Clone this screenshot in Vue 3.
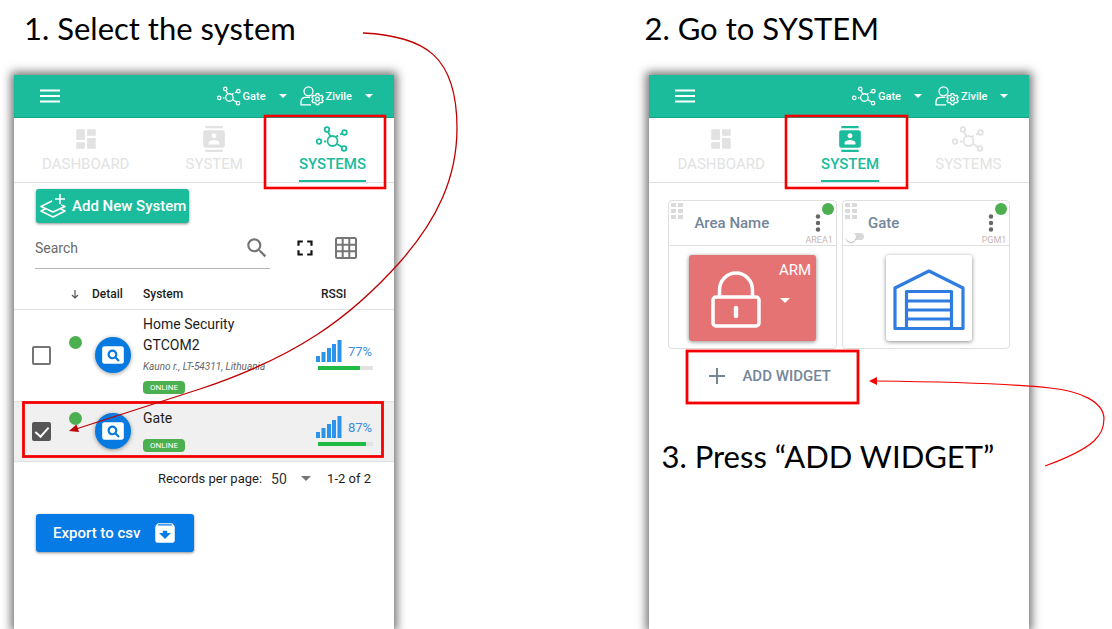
<script setup>
import { ref } from 'vue'

const search = ref('')
const perPage = ref('50')
const gateOn = ref(false)

const steps = [
  { id: 'systems', title: '1. Select the system', active: 'SYSTEMS' },
  { id: 'system', title: '2. Go to SYSTEM', active: 'SYSTEM' }
]

const tabs = ['DASHBOARD', 'SYSTEM', 'SYSTEMS']

const rows = ref([
  { id: 1, name: ['Home Security', 'GTCOM2'], place: 'Kauno r., LT-54311, Lithuania', rssi: 77, selected: false },
  { id: 2, name: ['Gate'], place: '', rssi: 87, selected: true }
])
</script>

<template>
  <main class="board">
    <section v-for="step in steps" :key="step.id" class="step" :class="'step-' + step.id">
      <h1 class="step-title">{{ step.title }}</h1>

      <div class="phone">
        <header class="topbar">
          <button class="icon-btn" type="button" aria-label="Menu">
            <svg width="20" height="14" viewBox="0 0 20 14" fill="none" stroke="#fff" stroke-width="2">
              <path d="M0 1.500h20M0 7h20M0 12.500h20" />
            </svg>
          </button>
          <div class="top-actions">
            <button class="top-btn" type="button">
              <svg width="24" height="20" viewBox="0 0 32 26" fill="none" stroke="#fff" stroke-width="1.700">
                <circle cx="16.500" cy="15" r="5" /><circle cx="3" cy="15.500" r="2.300" />
                <circle cx="11" cy="3.500" r="2.300" /><circle cx="28.500" cy="6.500" r="2.300" />
                <circle cx="28" cy="22.500" r="2.300" />
                <path d="M12 6l2.500 4.500M21 18l5 3M20 11l2-1.500M24 8.500l2-1M8 15.500h2" />
              </svg>
              <span class="top-label">Gate</span>
              <svg class="caret" width="8" height="4" viewBox="0 0 8 4"><path d="M0 0h8L4 4z" fill="#fff" /></svg>
            </button>
            <button class="top-btn" type="button">
              <svg width="24" height="20" viewBox="0 0 24 20" fill="none" stroke="#fff" stroke-width="1.300">
                <circle cx="8.500" cy="5.300" r="4.500" />
                <path d="M11 18.800H1v-3c0-3 2-4.500 5-4.500h4" />
                <circle cx="17.500" cy="13" r="1.900" />
                <path d="M16.300 7.700h2.400l.4 1.500 1.300.7 1.500-.5 1.200 2-1.100 1v1.400l1.100 1-1.200 2-1.500-.4-1.300.7-.4 1.500h-2.400l-.4-1.500-1.300-.7-1.500.4-1.200-2 1.100-1v-1.400l-1.100-1 1.200-2 1.500.5 1.300-.7z" />
              </svg>
              <span class="top-label">Zivile</span>
              <svg class="caret" width="8" height="4" viewBox="0 0 8 4"><path d="M0 0h8L4 4z" fill="#fff" /></svg>
            </button>
          </div>
        </header>

        <nav class="tabs">
          <a v-for="tab in tabs" :key="tab" href="#" class="tab" :class="{ active: tab === step.active }">
            <svg v-if="tab === 'DASHBOARD'" width="26" height="26" viewBox="0 0 24 24" fill="currentColor">
              <path d="M3 13h8V3H3v10zm0 8h8v-6H3v6zm10 0h8V11h-8v10zm0-18v6h8V3h-8z" />
            </svg>
            <svg v-else-if="tab === 'SYSTEM'" width="26" height="26" viewBox="0 0 24 24" fill="currentColor">
              <path d="M20 0H4v2h16V0zM4 24h16v-2H4v2zM20 4H4c-1.100 0-2 .9-2 2v12c0 1.100.9 2 2 2h16c1.100 0 2-.9 2-2V6c0-1.100-.9-2-2-2zm-8 2.750c1.240 0 2.250 1.010 2.250 2.250s-1.010 2.250-2.250 2.250S9.750 10.240 9.750 9 10.760 6.750 12 6.750zM17 17H7v-1.500c0-1.670 3.330-2.500 5-2.500s5 .83 5 2.500V17z" />
            </svg>
            <svg v-else width="32" height="26" viewBox="0 0 32 26" fill="none" stroke="currentColor" stroke-width="1.800">
              <circle cx="16.500" cy="15" r="5" /><circle cx="3" cy="15.500" r="2.300" />
              <circle cx="11" cy="3.500" r="2.300" /><circle cx="28.500" cy="6.500" r="2.300" />
              <circle cx="28" cy="22.500" r="2.300" />
              <path d="M12 6l2.500 4.500M21 18l5 3M20 11l2-1.500M24 8.500l2-1M8 15.500h2" />
            </svg>
            <span class="tab-label">{{ tab }}</span>
          </a>
        </nav>

        <div v-if="step.id === 'systems'" class="systems">
          <button class="add-system" type="button">
            <svg width="28" height="26" viewBox="0 0 28 26" fill="none" stroke="#fff" stroke-width="1.600" stroke-linejoin="round">
              <path d="M21 1v10M16 6h10M13 8L2 13.500 14 19l12-5.500-4-1.500M6 16l-4 2 12 6 12-6-4-2" />
            </svg>
            Add New System
          </button>

          <div class="tools">
            <div class="search">
              <input v-model="search" type="text" placeholder="Search" aria-label="Search" />
              <svg width="26" height="26" viewBox="0 0 24 24" fill="#757575">
                <path d="M15.500 14h-.79l-.28-.27A6.470 6.470 0 0 0 16 9.500 6.500 6.500 0 1 0 9.500 16c1.610 0 3.090-.59 4.230-1.570l.27.28v.79l5 4.990L20.490 19l-4.990-5zm-6 0C7.010 14 5 11.990 5 9.500S7.010 5 9.500 5 14 7.010 14 9.500 11.990 14 9.500 14z" />
              </svg>
            </div>
            <button class="icon-btn full" type="button" aria-label="Full screen">
              <svg width="26" height="26" viewBox="0 0 24 24" fill="#111">
                <path d="M7 14H5v5h5v-2H7v-3zm-2-4h2V7h3V5H5v5zm12 7h-3v2h5v-5h-2v3zM14 5v2h3v3h2V5h-5z" />
              </svg>
            </button>
            <button class="icon-btn" type="button" aria-label="Grid view">
              <svg width="22" height="22" viewBox="0 0 22 22" fill="none" stroke="#757575" stroke-width="2">
                <rect x="1" y="1" width="20" height="20" rx="1.500" />
                <path d="M7.700 1v20M14.300 1v20M1 7.700h20M1 14.300h20" />
              </svg>
            </button>
          </div>

          <table class="list">
            <colgroup>
              <col class="c-check" /><col class="c-dot" /><col class="c-detail" /><col /><col class="c-rssi" />
            </colgroup>
            <thead>
              <tr>
                <th></th>
                <th aria-label="Status">
                  <svg class="sort" width="8" height="9" viewBox="0 0 8 9" fill="none" stroke="#555" stroke-width="1.200"><path d="M4 0v8M1 5l3 3 3-3" /></svg>
                </th>
                <th>Detail</th>
                <th>System</th>
                <th class="rssi-head">RSSI</th>
              </tr>
            </thead>
            <tbody>
              <tr v-for="row in rows" :key="row.id" :class="{ selected: row.selected }">
                <td><input v-model="row.selected" type="checkbox" class="check" :aria-label="'Select ' + row.name.join(' ')" /></td>
                <td class="dot-cell"><span class="dot"></span></td>
                <td>
                  <button class="detail" type="button" :aria-label="'Details of ' + row.name.join(' ')">
                    <svg width="26" height="26" viewBox="0 0 24 24" fill="#fff">
                      <path d="M11.500 9C10.120 9 9 10.120 9 11.500s1.120 2.500 2.500 2.500 2.500-1.120 2.500-2.500S12.880 9 11.500 9zM20 4H4c-1.100 0-2 .9-2 2v12c0 1.100.9 2 2 2h16c1.100 0 2-.9 2-2V6c0-1.100-.9-2-2-2zm-3.210 14.210l-2.910-2.910c-.69.44-1.510.7-2.390.7C9.010 16 7 13.990 7 11.500S9.010 7 11.500 7 16 9.010 16 11.500c0 .88-.26 1.690-.7 2.390l2.910 2.900-1.420 1.420z" />
                    </svg>
                  </button>
                </td>
                <td class="info" :class="{ compact: !row.place }">
                  <div v-for="line in row.name" :key="line" class="name">{{ line }}</div>
                  <div v-if="row.place" class="place">{{ row.place }}</div>
                  <span class="badge">ONLINE</span>
                </td>
                <td class="rssi">
                  <div class="signal">
                    <svg width="26" height="22" viewBox="0 0 26 22" fill="#2b93ea">
                      <path d="M0 16h4v6H0zM5.500 12h4v10h-4zM11 8h4v14h-4zM16 4h4v18h-4zM21.500 0h4v22h-4z" />
                    </svg>
                    <span class="pct">{{ row.rssi }}%</span>
                  </div>
                  <div class="bar"><div class="bar-fill" :style="{ width: row.rssi + '%' }"></div></div>
                </td>
              </tr>
            </tbody>
          </table>

          <div class="pager">
            <label for="per-page">Records per page:</label>
            <div class="select-wrap">
              <select id="per-page" v-model="perPage"><option>50</option></select>
              <svg width="10" height="5" viewBox="0 0 10 5"><path d="M0 0h10L5 5z" fill="#757575" /></svg>
            </div>
            <span>1-2 of 2</span>
          </div>

          <button class="export" type="button">
            Export to csv
            <svg width="26" height="26" viewBox="0 0 24 24" fill="#fff">
              <path d="M20.540 5.230l-1.390-1.680C18.880 3.210 18.470 3 18 3H6c-.47 0-.88.21-1.160.55L3.460 5.230C3.170 5.570 3 6.020 3 6.500V19c0 1.100.9 2 2 2h14c1.100 0 2-.9 2-2V6.500c0-.48-.17-.93-.46-1.270zM12 17.500L6.500 12H10v-2h4v2h3.500L12 17.500zM5.120 5l.81-1h12l.94 1H5.120z" />
            </svg>
          </button>
        </div>

        <div v-else class="widgets">
          <div class="cards">
            <article class="card">
              <div class="card-head">
                <svg class="grip" width="12" height="16" viewBox="0 0 12 16" fill="#dadada">
                  <path d="M0 0h5v4H0zM7 0h5v4H7zM0 6h5v4H0zM7 6h5v4H7zM0 12h5v4H0zM7 12h5v4H7z" />
                </svg>
                <h2>Area Name</h2>
                <button class="icon-btn" type="button" aria-label="Area options">
                  <svg width="6" height="18" viewBox="0 0 6 18" fill="#666"><circle cx="3" cy="2.500" r="2.200" /><circle cx="3" cy="9" r="2.200" /><circle cx="3" cy="15.500" r="2.200" /></svg>
                </button>
                <span class="state"></span>
                <span class="code">AREA1</span>
              </div>
              <button class="arm" type="button">
                <svg width="50" height="58" viewBox="0 0 50 58" fill="none" stroke="#fff" stroke-width="3.500">
                  <rect x="2" y="26" width="46" height="29" rx="3" />
                  <path d="M8.500 26v-7a16.500 17 0 0 1 33 0v7" />
                  <path d="M25 37v8" stroke-width="4.500" stroke-linecap="round" />
                </svg>
                <svg class="arm-caret" width="10" height="5" viewBox="0 0 10 5"><path d="M0 0h10L5 5z" fill="#fff" /></svg>
                <span class="arm-label">ARM</span>
              </button>
            </article>

            <article class="card">
              <div class="card-head">
                <svg class="grip" width="12" height="16" viewBox="0 0 12 16" fill="#dadada">
                  <path d="M0 0h5v4H0zM7 0h5v4H7zM0 6h5v4H0zM7 6h5v4H7zM0 12h5v4H0zM7 12h5v4H7z" />
                </svg>
                <h2>Gate</h2>
                <button class="icon-btn" type="button" aria-label="Gate options">
                  <svg width="6" height="18" viewBox="0 0 6 18" fill="#666"><circle cx="3" cy="2.500" r="2.200" /><circle cx="3" cy="9" r="2.200" /><circle cx="3" cy="15.500" r="2.200" /></svg>
                </button>
                <span class="state"></span>
                <input v-model="gateOn" type="checkbox" class="toggle" aria-label="Gate output" />
                <span class="code">PGM1</span>
              </div>
              <button class="gate" type="button" aria-label="Operate gate">
                <svg width="72" height="62" viewBox="0 0 72 62" fill="none" stroke="#2f7de1" stroke-width="3.200" stroke-linejoin="round">
                  <path d="M2 59.500V19L36 2l34 17v40.500z" />
                  <path d="M13.500 59V22.500h45V59M13.500 32h45M13.500 41h45M13.500 50h45" />
                </svg>
              </button>
            </article>
          </div>
          <button class="add-widget" type="button">
            <svg width="16" height="16" viewBox="0 0 16 16" fill="none" stroke="#73869a" stroke-width="2"><path d="M8 0v16M0 8h16" /></svg>
            ADD WIDGET
          </button>
          <h1 class="third-title">3. Press “ADD WIDGET”</h1>
        </div>
      </div>

      <svg v-if="step.id === 'systems'" class="marks" width="470" height="470" viewBox="0 0 470 470" fill="none" stroke="#f40000" aria-hidden="true">
        <rect x="265" y="116" width="120" height="72" stroke-width="2.600" />
        <rect x="23.500" y="402.500" width="359" height="54" stroke-width="2.800" />
        <path d="M363 33C425 36 457 56 457 128C457 178 437 220 400 262C350 318 296 357 200 389L76 429" stroke="#c00000" stroke-width="1.300" />
        <path d="M69 431l7.500-6.500 2.500 7.500z" fill="#c00000" stroke="none" />
      </svg>
      <svg v-else class="marks" width="474" height="480" viewBox="0 0 474 480" fill="none" stroke="#f40000" aria-hidden="true">
        <rect x="151" y="116" width="121" height="72" stroke-width="2.600" />
        <rect x="52" y="351" width="171" height="52" stroke-width="2.800" />
        <path d="M410 466C432 458 449 450 459 441C466 434 469 428 469 418C468 402 446 391 415 388C378 384 330 382 241 381" stroke-width="1.200" />
        <path d="M234 381l8-4v8z" fill="#f40000" stroke="none" />
      </svg>
    </section>
  </main>
</template>

<style>
body { margin: 0; background: #fff; }
</style>

<style scoped>
.board {
  display: grid;
  grid-template-columns: 4fr 3fr;
  height: 100vh;
  overflow: hidden;
  font-family: Roboto, "Liberation Sans", sans-serif;
  color: #1d1d1d;
}
.board * { box-sizing: border-box; }
button {
  border: 0;
  padding: 0;
  background: none;
  font-family: inherit;
  cursor: pointer;
}
svg { display: block; flex: none; }
.step { position: relative; display: flex; flex-direction: column; }
.step-title, .third-title {
  margin: 0;
  font-family: Lato, "Noto Sans", sans-serif;
  font-weight: 400;
  font-size: 31px;
  line-height: 40px;
  color: #000;
  white-space: nowrap;
}
.step-title { padding: 8px 0 27px 24px; }
.step-system .step-title { padding-left: 9px; }
.phone {
  flex: 1;
  width: calc(100% - 28px);
  max-width: 380px;
  margin-left: 14px;
  background: #fff;
  box-shadow: 0 0 9px 3px rgba(0, 0, 0, 0.55);
}
.marks { position: absolute; top: 0; left: 0; pointer-events: none; }

.topbar {
  display: flex;
  align-items: center;
  justify-content: space-between;
  height: 43px;
  padding: 0 21px 0 26px;
  background: #1abc9c;
  border-bottom: 1px solid #17a589;
}
.top-actions { display: flex; gap: 13px; }
.top-btn { display: flex; align-items: center; color: #fff; }
.top-label { margin-left: 2px; font-size: 11px; font-weight: 500; }
.caret { margin-left: 13px; }

.tabs {
  display: flex;
  justify-content: space-between;
  height: 65px;
  padding: 8px 28px 0;
  border-bottom: 1px solid #e0e0e0;
}
.tab {
  display: flex;
  flex-direction: column;
  align-items: center;
  height: 56px;
  color: #e2e2e2;
  text-decoration: none;
}
.tab-label { margin-top: 2px; font-size: 15px; line-height: 20px; }
.tab.active { color: #1abc9c; border-bottom: 2px solid #1abc9c; }
.tab.active .tab-label { font-weight: 500; }

.add-system {
  display: flex;
  align-items: center;
  gap: 5px;
  height: 34px;
  margin: 6px 0 0 22px;
  padding: 0 3px;
  border-radius: 3px;
  background: #1abc9c;
  box-shadow: 0 1px 3px rgba(0, 0, 0, 0.45);
  color: #fff;
  font-size: 15px;
  font-weight: 500;
}
.tools { display: flex; align-items: center; margin-top: 4px; padding: 0 37px 0 21px; }
.search {
  display: flex;
  align-items: center;
  flex: 1;
  height: 42px;
  border-bottom: 1px solid #b5b5b5;
}
.search input {
  flex: 1;
  min-width: 0;
  padding: 0;
  border: 0;
  outline: 0;
  background: none;
  font: 14px Roboto, sans-serif;
}
.search input::placeholder { color: #6b6b6b; opacity: 1; }
.full { margin: 0 17px 0 22px; }

.list { width: 100%; margin-top: 11px; border-collapse: collapse; table-layout: fixed; }
.c-check { width: 55px; }
.c-dot { width: 23px; }
.c-detail { width: 51px; }
.c-rssi { width: 92px; }
.list th {
  height: 29px;
  padding: 0;
  border-bottom: 1px solid #e0e0e0;
  font-size: 12px;
  font-weight: 500;
  text-align: left;
}
.sort { margin-left: 2px; }
.list .rssi-head { padding-left: 19px; }
.list td { padding: 0; border-bottom: 1px solid #e0e0e0; vertical-align: middle; }
.list tr.selected { background: #f0f0f0; }
.check {
  display: block;
  position: relative;
  width: 19px;
  height: 19px;
  margin: 0 0 0 18px;
  appearance: none;
  border: 2px solid #757575;
  border-radius: 2px;
}
.check:checked { background: #555; border-color: #555; }
.check:checked::after {
  content: "";
  position: absolute;
  left: 4px;
  top: 0;
  width: 6px;
  height: 11px;
  border: solid #fff;
  border-width: 0 2px 2px 0;
  transform: rotate(42deg);
}
.list .dot-cell { padding-bottom: 26px; }
.dot { display: block; width: 13px; height: 13px; border-radius: 50%; background: #4caf50; }
.detail {
  display: grid;
  place-items: center;
  width: 36px;
  height: 36px;
  margin-left: 3px;
  border-radius: 50%;
  background: #067ae0;
  box-shadow: 0 1px 4px rgba(0, 0, 0, 0.4);
}
.list .info { padding: 4px 0 7px; }
.list .info.compact { padding: 6px 0 9px; }
.name { font-size: 14px; line-height: 21px; }
.place { margin-bottom: 3px; font-size: 10px; line-height: 22px; font-style: italic; color: #666; white-space: nowrap; }
.badge {
  display: block;
  width: 42px;
  height: 13px;
  border-radius: 4px;
  background: #4caf50;
  color: #fff;
  font-size: 8px;
  line-height: 13px;
  text-align: center;
}
.name + .badge { margin-top: 10px; }
.list .rssi { padding-left: 14px; }
.signal { display: flex; align-items: center; gap: 6px; }
.pct { font-size: 13px; color: #3c8fe0; }
.bar { width: 55px; height: 4px; margin: 4px 0 0 2px; background: #e2e2e2; }
.bar-fill { height: 4px; background: #21ba45; }

.pager {
  display: flex;
  align-items: center;
  justify-content: flex-end;
  height: 34px;
  padding-right: 23px;
  font-size: 13px;
}
.select-wrap { display: flex; align-items: center; margin: 0 16px 0 9px; }
.select-wrap select {
  width: 30px;
  padding: 0;
  border: 0;
  appearance: none;
  background: none;
  color: #333;
  font: 14px Roboto, sans-serif;
}
.export {
  display: flex;
  align-items: center;
  gap: 12px;
  height: 38px;
  margin: 18px 0 0 22px;
  padding: 0 16px 0 17px;
  border-radius: 3px;
  background: #067ae5;
  box-shadow: 0 1px 3px rgba(0, 0, 0, 0.45);
  color: #fff;
  font-size: 15px;
  font-weight: 500;
}

.widgets { padding: 17px 19px 0; }
.cards { display: grid; grid-template-columns: 1fr 1fr; gap: 5px; }
.card { height: 149px; border: 1px solid #dfdfdf; border-radius: 4px; }
.card-head {
  position: relative;
  display: flex;
  align-items: center;
  justify-content: space-between;
  height: 45px;
  padding: 0 15px 0 25px;
  border-bottom: 1px solid #e0e0e0;
}
.card-head h2 { margin: 0; font-size: 15px; font-weight: 500; color: #73869a; }
.grip { position: absolute; left: 2px; top: 2px; }
.state { position: absolute; right: 2px; top: 2px; width: 12px; height: 12px; border-radius: 50%; background: #4caf50; }
.code { position: absolute; right: 3px; bottom: 0; font-size: 9px; line-height: 10px; color: #c6b6b6; }
.toggle {
  position: absolute;
  left: 7px;
  bottom: 5px;
  width: 14px;
  height: 7px;
  margin: 0;
  appearance: none;
  border-radius: 4px;
  background: #d8d8d8;
}
.toggle::after {
  content: "";
  position: absolute;
  left: -4px;
  top: -1px;
  width: 10px;
  height: 10px;
  border-radius: 50%;
  background: #fff;
  box-shadow: 0 1px 1px rgba(0, 0, 0, 0.3);
}
.arm {
  position: relative;
  display: flex;
  align-items: center;
  width: 127px;
  height: 86px;
  margin: 9px auto 0;
  padding: 4px 0 0 22px;
  border-radius: 3px;
  background: #e57373;
  box-shadow: 0 1px 4px rgba(0, 0, 0, 0.45);
  color: #fff;
}
.arm-caret { margin-left: 19px; }
.arm-label { position: absolute; right: 5px; top: 6px; font-size: 15px; line-height: 18px; }
.gate {
  display: grid;
  place-items: center;
  width: 86px;
  height: 86px;
  margin: 9px 0 0 43px;
  padding-top: 4px;
  border-radius: 3px;
  background: #fff;
  box-shadow: 0 1px 4px rgba(0, 0, 0, 0.45);
}
.add-widget {
  display: flex;
  align-items: center;
  gap: 17px;
  height: 50px;
  margin: 2px 0 0 41px;
  color: #73869a;
  font-size: 15px;
  font-weight: 500;
}
.third-title { margin-top: 35px; margin-left: -7px; }
</style>
